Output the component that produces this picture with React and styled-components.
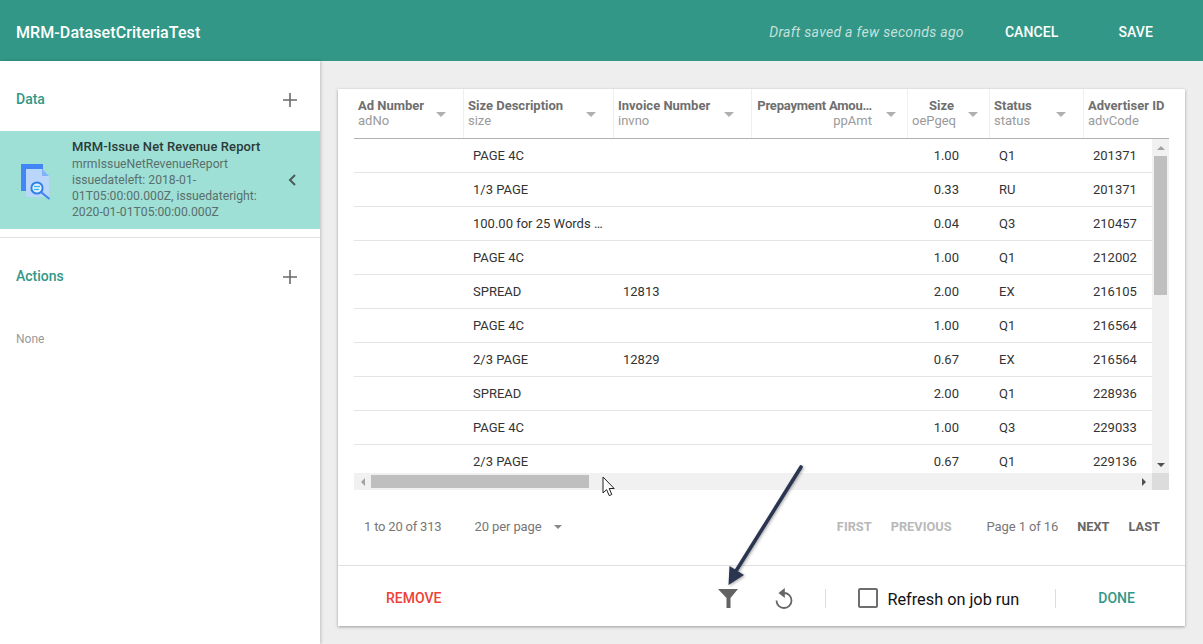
import React from "react";
import styled, { createGlobalStyle } from "styled-components";

const Global = createGlobalStyle`
  html, body { margin: 0; padding: 0; height: 100%; overflow: hidden; }
  body { font-family: Roboto, "Liberation Sans", sans-serif; background: #eeeeee; }
  * { box-sizing: border-box; }
`;

const COLS = "109px 150px 138px 156px 82px 94px 1fr";

const Page = styled.div`
  width: 1203px; height: 644px; position: relative; display: flex; flex-direction: column; overflow: hidden;
`;
const Header = styled.header`
  height: 61px; flex: none; background: #329786; display: flex; align-items: center; padding: 0 50px 0 16px; color: #fff;
`;
const Title = styled.div`
  font-size: 16px; font-weight: 500; flex: 1; margin-top: 3px; letter-spacing: .09px;
`;
const Draft = styled.div`
  font-size: 14px; font-style: italic; color: rgba(255,255,255,.72); margin-right: 41px; margin-top: 3px; letter-spacing: .3px;
`;
const HeaderBtn = styled.div`
  font-size: 14px; font-weight: 500; margin-left: ${p => p.$ml || 0}px; margin-top: 2px; letter-spacing: .1px;
`;
const Body = styled.div`
  flex: 1; display: flex; min-height: 0;
`;
const Sidebar = styled.aside`
  width: 320px; flex: none; background: #fff; box-shadow: 1px 0 3px rgba(0,0,0,.2); display: flex; flex-direction: column;
`;
const SectionHead = styled.div`
  height: ${p => p.$h}px; display: flex; align-items: center; justify-content: space-between; padding: ${p => p.$pt || 0}px 23px ${p => p.$pb || 0}px 16px;
  color: #329786; font-size: 14px; font-weight: 500;
`;
const Selected = styled.div`
  height: 98px; background: #9ee0d6; display: flex; align-items: center; padding: 0 20px 0 20px;
`;
const SelectedText = styled.div`
  width: 200px; margin-left: 20px; font-size: 12.2px; line-height: 16.2px; color: #5b6f6b;
`;
const SelectedTitle = styled.div`
  font-size: 13px; font-weight: 500; color: #2c3a38; letter-spacing: .1px; white-space: nowrap;
`;
const Divider = styled.div`
  height: 1px; background: #e2e2e2; margin-top: 8px; flex: none;
`;
const None = styled.div`
  font-size: 12px; color: #999; padding: 16px 16px 0;
`;
const Main = styled.main`
  flex: 1; padding: 28px 18px 18px; display: flex; min-width: 0;
`;
const Card = styled.section`
  flex: 1; background: #fff; box-shadow: 0 1px 3px rgba(0,0,0,.35); display: flex; flex-direction: column; min-width: 0;
`;
const TableWrap = styled.div`
  margin: 0 16px; display: flex; flex-direction: column;
`;
const HeadRow = styled.div`
  height: 50px; display: grid; grid-template-columns: ${COLS}; border-bottom: 1px solid #b0b0b0;
`;
const HeadCell = styled.div`
  display: flex; align-items: flex-start; padding: 9px ${p => p.$pr}px 0 ${p => p.$pl}px;
  border-left: 1px solid ${p => (p.$first ? "transparent" : "#efefef")}; min-width: 0;
`;
const HeadText = styled.div`
  flex: 1; min-width: 0; font-size: 13px; line-height: 15px; text-align: ${p => (p.$right ? "right" : "left")};
`;
const HeadName = styled.div`
  font-weight: 700; color: #6f6f6f; white-space: nowrap; letter-spacing: ${p => (p.$tight ? "-.2px" : "0")};
`;
const HeadSub = styled.div`
  color: #9a9a9a; white-space: nowrap;
`;
const Caret = styled.span`
  flex: none; width: 0; height: 0; margin: 14px 0 0 ${p => p.$ml || 0}px;
  border-left: 5px solid transparent; border-right: 5px solid transparent; border-top: 5px solid #b0b0b0;
`;
const Viewport = styled.div`
  height: 334px; display: flex;
`;
const Rows = styled.div`
  flex: 1; overflow: hidden; min-width: 0;
`;
const Row = styled.div`
  height: 34px; display: grid; grid-template-columns: ${COLS}; border-bottom: 1px solid #e4e4e4; align-items: center;
  font-size: 13px; color: #333; padding-bottom: 1px;
`;
const Cell = styled.div`
  padding: 0 ${p => (p.$right ? 30 : 10)}px 0 10px; text-align: ${p => (p.$right ? "right" : "left")}; white-space: nowrap; overflow: hidden;
`;
const VBar = styled.div`
  width: 17px; flex: none; background: #f1f1f1; display: flex; flex-direction: column; align-items: center;
`;
const VThumb = styled.div`
  width: 13px; height: 139px; flex: none; background: #bfbfbf;
`;
const Spacer = styled.div`
  flex: 1;
`;
const VArrow = styled.div`
  height: 17px; flex: none; width: 100%; display: flex; align-items: center; justify-content: center;
`;
const Tri = styled.span`
  width: 0; height: 0;
  ${p => p.$dir === "up" && "border-left:4px solid transparent;border-right:4px solid transparent;border-bottom:4px solid #a3a3a3;"}
  ${p => p.$dir === "down" && "border-left:4px solid transparent;border-right:4px solid transparent;border-top:4px solid #505050;"}
  ${p => p.$dir === "left" && "border-top:4px solid transparent;border-bottom:4px solid transparent;border-right:4px solid #a3a3a3;"}
  ${p => p.$dir === "right" && "border-top:4px solid transparent;border-bottom:4px solid transparent;border-left:4px solid #505050;"}
`;
const HBar = styled.div`
  height: 17px; background: #f1f1f1; display: flex; align-items: center;
`;
const HArrow = styled.div`
  width: 17px; height: 17px; flex: none; display: flex; align-items: center; justify-content: center;
`;
const HThumb = styled.div`
  width: 218px; height: 13px; background: #bfbfbf; flex: none;
`;
const Corner = styled.div`
  width: 17px; height: 17px; background: #dcdcdc; flex: none;
`;
const Pager = styled.div`
  height: 75px; flex: none; display: flex; align-items: center; padding: 0 25px 2px 26px; font-size: 13px; color: #777;
`;
const Count = styled.div`
  letter-spacing: -.2px;
`;
const PerPage = styled.div`
  margin-left: 33px; display: flex; align-items: center; letter-spacing: -.1px;
`;
const SmallCaret = styled.span`
  width: 0; height: 0; margin-left: 12px; border-left: 4px solid transparent; border-right: 4px solid transparent; border-top: 4px solid #888;
`;
const PageBtn = styled.div`
  font-size: 12.8px; font-weight: 700; color: ${p => (p.$off ? "#b9b9b9" : "#666")}; margin-left: ${p => p.$ml || 0}px;
`;
const PageLabel = styled.div`
  margin-left: 35px; letter-spacing: -.1px;
`;
const Footer = styled.div`
  flex: 1; border-top: 1px solid #e0e0e0; display: flex; align-items: center; padding: 4px 49px 0 48px;
`;
const Remove = styled.div`
  font-size: 14px; font-weight: 500; color: #ee4138;
`;
const IconSlot = styled.div`
  display: flex; margin-left: ${p => p.$ml}px;
`;
const VLine = styled.div`
  width: 1px; height: 19px; background: #ddd; margin-left: ${p => p.$ml}px;
`;
const Check = styled.div`
  width: 20px; height: 20px; border: 2px solid #6e6e6e; border-radius: 2px; margin-left: 32px;
`;
const CheckLabel = styled.div`
  font-size: 16.3px; color: #111; margin-left: 9px; margin-top: 2px;
`;
const Done = styled.div`
  font-size: 14px; font-weight: 500; color: #329786; margin-left: 42px;
`;
const Overlay = styled.svg`
  position: absolute; left: 0; top: 0; pointer-events: none;
`;

const heads = [
  ["Ad Number", "adNo", 3, 17, 0],
  ["Size Description", "size", 4, 17, 0],
  ["Invoice Number", "invno", 4, 17, 0],
  ["Prepayment Amou…", "ppAmt", 4, 11, 14, true, true],
  ["Size", "oePgeq", 4, 11, 14, true],
  ["Status", "status", 4, 17, 0],
  ["Advertiser ID", "advCode", 4, 0, 0],
];
const rows = [
  ["PAGE 4C", "", "1.00", "Q1", "201371"],
  ["1/3 PAGE", "", "0.33", "RU", "201371"],
  ["100.00 for 25 Words …", "", "0.04", "Q3", "210457"],
  ["PAGE 4C", "", "1.00", "Q1", "212002"],
  ["SPREAD", "12813", "2.00", "EX", "216105"],
  ["PAGE 4C", "", "1.00", "Q1", "216564"],
  ["2/3 PAGE", "12829", "0.67", "EX", "216564"],
  ["SPREAD", "", "2.00", "Q1", "228936"],
  ["PAGE 4C", "", "1.00", "Q3", "229033"],
  ["2/3 PAGE", "", "0.67", "Q1", "229136"],
];

const Plus = () => (
  <svg width="14" height="14" viewBox="0 0 14 14" style={{ marginTop: 1 }}><path d="M7 0v14M0 7h14" stroke="#6a6a6a" strokeWidth="1.6" fill="none" /></svg>
);
const DocIcon = () => (
  <svg width="32" height="36" viewBox="0 0 32 36" style={{ flex: "none", marginTop: 3 }}>
    <rect x="1" y="0" width="22" height="27" fill="#4285f4" />
    <path d="M6 5h16l7 7v21H6z" fill="#bbd6fb" />
    <path d="M22 5l7 7h-7z" fill="#7fb2f8" />
    <circle cx="17" cy="24" r="5.6" fill="#e3f0fd" stroke="#2f7fe8" strokeWidth="2" />
    <path d="M14 22.5h6" stroke="#39b6e8" strokeWidth="1.3" /><path d="M14 25.5h5" stroke="#39b6e8" strokeWidth="1.3" />
    <path d="M21.5 28.5L29.5 35" stroke="#3b86ea" strokeWidth="2" />
  </svg>
);
const Chevron = () => (
  <svg width="10" height="14" viewBox="0 0 10 14" style={{ marginLeft: 15, flex: "none" }}><path d="M8 2L3 7l5 5" stroke="#4a5a58" strokeWidth="2" fill="none" /></svg>
);
const Funnel = () => (
  <svg width="20" height="19" viewBox="0 0 20 19"><path d="M0 0h20l-7.5 9v10h-4V9z" fill="#636363" /></svg>
);
const Undo = () => (
  <svg width="18" height="21" viewBox="0 0 18 21">
    <path d="M9 5a7.5 7.5 0 1 1-7.5 7.5" stroke="#666" strokeWidth="1.8" fill="none" />
    <path d="M9.8 0v10L3.5 5z" fill="#666" />
  </svg>
);

export default function App() {
  return (
    <Page>
      <Global />
      <Header>
        <Title>MRM-DatasetCriteriaTest</Title>
        <Draft>Draft saved a few seconds ago</Draft>
        <HeaderBtn>CANCEL</HeaderBtn>
        <HeaderBtn $ml={60}>SAVE</HeaderBtn>
      </Header>
      <Body>
        <Sidebar>
          <SectionHead $h={70} $pt={6}>Data<Plus /></SectionHead>
          <Selected>
            <DocIcon />
            <SelectedText>
              <SelectedTitle>MRM-Issue Net Revenue Report</SelectedTitle>
              <div>mrmIssueNetRevenueReport</div>
              <div>issuedateleft: 2018-01-01T05:00:00.000Z, issuedateright: 2020-01-01T05:00:00.000Z</div>
            </SelectedText>
            <Chevron />
          </Selected>
          <Divider />
          <SectionHead $h={78} $pb={2}>Actions<Plus /></SectionHead>
          <None>None</None>
        </Sidebar>
        <Main>
          <Card>
            <TableWrap>
              <HeadRow>
                {heads.map((h, i) => (
                  <HeadCell key={h[1]} $pl={h[2]} $pr={h[3]} $first={i === 0}>
                    <HeadText $right={h[5]}>
                      <HeadName $tight={h[6]}>{h[0]}</HeadName>
                      <HeadSub>{h[1]}</HeadSub>
                    </HeadText>
                    {i < 6 && <Caret $ml={h[4] || 9} />}
                  </HeadCell>
                ))}
              </HeadRow>
              <Viewport>
                <Rows>
                  {rows.map((r, i) => (
                    <Row key={i}>
                      <Cell />
                      <Cell>{r[0]}</Cell>
                      <Cell>{r[1]}</Cell>
                      <Cell />
                      <Cell $right>{r[2]}</Cell>
                      <Cell>{r[3]}</Cell>
                      <Cell>{r[4]}</Cell>
                    </Row>
                  ))}
                </Rows>
                <VBar>
                  <VArrow><Tri $dir="up" /></VArrow>
                  <VThumb />
                  <Spacer />
                  <VArrow><Tri $dir="down" /></VArrow>
                </VBar>
              </Viewport>
              <HBar>
                <HArrow><Tri $dir="left" /></HArrow>
                <HThumb />
                <Spacer />
                <HArrow><Tri $dir="right" /></HArrow>
                <Corner />
              </HBar>
            </TableWrap>
            <Pager>
              <Count>1 to 20 of 313</Count>
              <PerPage>20 per page<SmallCaret /></PerPage>
              <Spacer />
              <PageBtn $off>FIRST</PageBtn>
              <PageBtn $off $ml={19}>PREVIOUS</PageBtn>
              <PageLabel>Page 1 of 16</PageLabel>
              <PageBtn $ml={19}>NEXT</PageBtn>
              <PageBtn $ml={19}>LAST</PageBtn>
            </Pager>
            <Footer>
              <Remove>REMOVE</Remove>
              <IconSlot $ml={277}><Funnel /></IconSlot>
              <IconSlot $ml={37}><Undo /></IconSlot>
              <VLine $ml={32} />
              <Check />
              <CheckLabel>Refresh on job run</CheckLabel>
              <VLine $ml={36} />
              <Done>DONE</Done>
            </Footer>
          </Card>
        </Main>
      </Body>
      <Overlay width="1203" height="644">
        <defs>
          <filter id="sh" x="-30%" y="-30%" width="160%" height="160%">
            <feDropShadow dx="1" dy="1" stdDeviation="1.5" floodColor="#000" floodOpacity=".35" />
          </filter>
        </defs>
        <g filter="url(#sh)">
          <path d="M801 467L736 571" stroke="#2a3550" strokeWidth="3.6" strokeLinecap="round" fill="none" />
          <path d="M728.5 585L729.5 566L744 575z" fill="#2a3550" />
        </g>
        <path d="M603 477v16l3.6-3.4 2.6 6 2.6-1.1-2.6-6h5z" fill="#fff" stroke="#222" strokeWidth="1" />
      </Overlay>
    </Page>
  );
}
